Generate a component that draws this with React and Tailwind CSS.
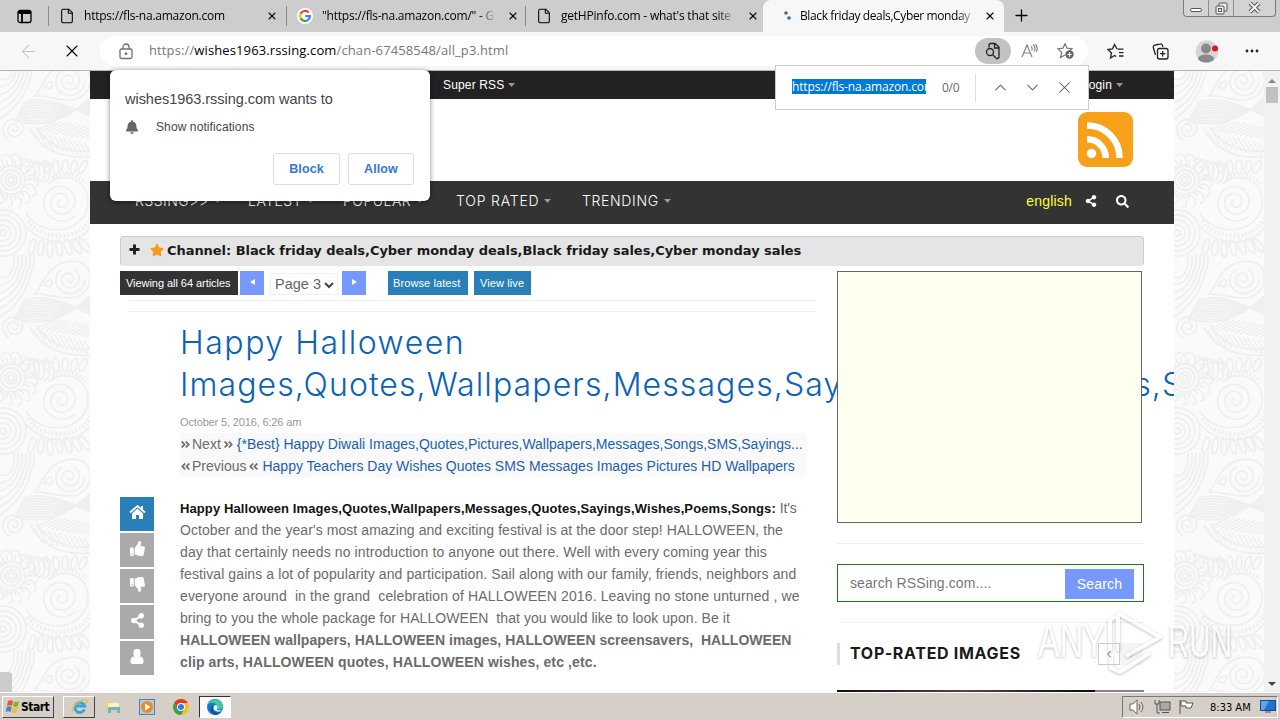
import React from 'react';
import { FaShareAlt, FaSearch, FaThumbsUp, FaThumbsDown, FaStar, FaBell, FaAngleDoubleRight, FaAngleDoubleLeft } from 'react-icons/fa';
import { ArrowLeft, X, Plus, File, ChevronUp, ChevronDown, ChevronLeft, ChevronRight } from 'lucide-react';

const spiral = (cx, cy, r, turns, start = 0) => {
  const steps = turns * 24;
  const points = [];
  for (let i = 0; i <= steps; i += 1) {
    const a = start + (i / 24) * Math.PI * 2;
    const d = r * (1 - i / (steps + 6));
    points.push(`${(cx + Math.cos(a) * d).toFixed(1)},${(cy + Math.sin(a) * d).toFixed(1)}`);
  }
  return points.join(' ');
};

const range = (n) => Array.from({ length: n }, (_, i) => i);

const Paisley = ({ id }) => (
  <svg width="90" height="621" className="block shrink-0 bg-[#fafafa]">
    <defs>
      <pattern id={id} width="90" height="198" patternUnits="userSpaceOnUse">
        <g fill="none" stroke="#efefef" strokeWidth="1.8">
          <polyline points={spiral(69, 10, 16, 2.5)} />
          <path d="M35 25 C44 15 46 -6 72 -8 C96 -8 96 22 76 28 C62 32 48 24 35 25Z M44 16 C50 6 56 12 50 18Z" />
          <path d="M35 223 C44 213 46 192 72 190 C84 190 90 197 90 204" />
          {range(10).map((i) => (
            <path key={i} d={`M${14 + i} ${50 - i * 2} C40 ${56 - i * 3.5} 62 ${54 - i * 2.5} 90 ${27 + i * 2}`} />
          ))}
          {range(6).map((i) => (
            <path key={i} d={`M0 ${48 - i * 8} C${22 - i * 3} ${34 - i * 5} ${32 - i * 4} 12 ${34 - i * 4} -14`} />
          ))}
          {range(6).map((i) => (
            <path key={i} d={`M${34 - i * 4} 184 Q${34 - i * 4} 192 ${33 - i * 4} 200`} />
          ))}
          <polyline points={spiral(14, 58, 12, 2.2, 2)} />
          <path d="M30 58 C42 80 62 88 90 86 M36 56 C46 74 68 82 90 80" />
          {range(11).map((i) => (
            <path key={i} d={`M${34 + i * 5} ${61 + i} l9 15 M${36 + i * 5} ${60 + i * 0.8} l20 -10`} strokeWidth="1.4" />
          ))}
          {[3, 6, 10, 14].map((r) => <circle key={r} cx="11" cy="109" r={r} />)}
          {range(14).map((i) => {
            const a = (i * Math.PI) / 7;
            const x = 11 + Math.cos(a) * 21;
            const y = 109 + Math.sin(a) * 21;
            return <path key={i} d={`M${11 + Math.cos(a) * 14} ${109 + Math.sin(a) * 14} L${x} ${y} m-5 -3 q6 -5 10 2 q3 7 -3 8`} />;
          })}
          {range(5).map((i) => <path key={i} d={`M${24 + i * 5} ${92 + i} q8 -8 10 4 t-6 12`} />)}
          <polyline points={spiral(61, 131, 20, 2.6, 0.8)} />
          <path d="M26 142 C38 165 82 166 88 134 C90 108 64 100 50 112" />
          <path d="M28 150 C44 172 86 170 92 142 M52 107 Q72 98 86 112" strokeWidth="4" strokeDasharray="2 2" />
          <path d="M26 155 C44 178 86 176 94 148" />
          {range(7).map((i) => (
            <ellipse key={i} cx={32 + i * 9} cy={178 - Math.abs(i - 2)} rx="3" ry="8" transform={`rotate(${16 - i * 9} ${32 + i * 9} 176)`} />
          ))}
          {range(5).map((i) => (
            <ellipse key={i} cx={47 + i * 9} cy={96} rx="3" ry="7" transform={`rotate(${i * 12 - 20} ${47 + i * 9} 96)`} />
          ))}
          {[3, 8, 13, 18, 23].map((r) => <circle key={r} cx="3" cy="162" r={r} />)}
        </g>
      </pattern>
    </defs>
    <rect width="90" height="621" fill={`url(#${id})`} />
  </svg>
);

const TabTitle = ({ children, className }) => (
  <span className={`overflow-hidden whitespace-nowrap text-xs tracking-[-.23px] text-black [mask-image:linear-gradient(to_right,black_90%,transparent)] ${className}`}>{children}</span>
);

const GoogleIcon = () => (
  <svg width="16" height="16" viewBox="0 0 16 16" fill="none" strokeWidth="2.2" className="shrink-0">
    <circle cx="8" cy="8" r="8" fill="white" />
    <path d="M11.8 4.6A5 5 0 0 0 3.6 5.8" stroke="#ea4335" />
    <path d="M3.6 5.8A5 5 0 0 0 3.7 10.4" stroke="#fbbc05" />
    <path d="M3.7 10.4A5 5 0 0 0 11.2 11.8" stroke="#34a853" />
    <path d="M11.2 11.8A5 5 0 0 0 13 8.2H8.2" stroke="#4285f4" />
  </svg>
);

const TabBar = () => (
  <div className="flex h-8 shrink-0 bg-[#cdcdcd] font-['Open_Sans',sans-serif]">
    <div className="flex w-12 items-center justify-center">
      <svg width="15" height="15" viewBox="0 0 15 15" fill="none" stroke="black" strokeWidth="1.3">
        <rect x="1" y="1.5" width="13" height="12" rx="2" />
        <path d="M1 3h13M1.5 4h12M5 4v9" strokeWidth="1.8" />
      </svg>
    </div>
    <div className="mt-1.5 h-5 w-px bg-[#8a8a8a]" />
    <div className="flex w-[237px] items-center pl-2.5">
      <File size={16} strokeWidth={1.6} className="shrink-0" />
      <TabTitle className="ml-[9px] mr-1 w-[178px]">https://fls-na.amazon.com</TabTitle>
      <X size={12} strokeWidth={2.2} className="shrink-0" />
    </div>
    <div className="mt-1.5 h-5 w-px bg-[#8a8a8a]" />
    <div className="flex w-[238px] items-center pl-2.5">
      <GoogleIcon />
      <TabTitle className="ml-[9px] mr-[11px] w-[174px]">"https://fls-na.amazon.com/" - G</TabTitle>
      <X size={12} strokeWidth={2.2} className="shrink-0" />
    </div>
    <div className="mt-1.5 h-5 w-px bg-[#8a8a8a]" />
    <div className="flex w-[237px] items-center pl-2.5">
      <File size={16} strokeWidth={1.6} className="shrink-0" />
      <TabTitle className="ml-[9px] mr-3 w-[174px] tracking-[-.3px]">getHPinfo.com - what's that site</TabTitle>
      <X size={12} strokeWidth={2.2} className="shrink-0" />
    </div>
    <div className="flex w-[241px] items-center rounded-t-lg bg-[#f7f7f7] pl-5">
      <svg width="10" height="12" viewBox="0 0 10 12" className="shrink-0">
        <circle cx="3" cy="3" r="1.8" fill="#4a6785" />
        <circle cx="6" cy="8" r="1.8" fill="#2b6ea8" />
      </svg>
      <TabTitle className="ml-[7px] mr-2 w-[176px] tracking-[-.38px]">Black friday deals,Cyber monday</TabTitle>
      <X size={12} strokeWidth={2.2} className="shrink-0" />
    </div>
    <Plus size={19} strokeWidth={1.6} className="ml-2 mt-1.5" />
    <div className="ml-auto mr-1 flex h-[17px] w-[93px] overflow-hidden rounded-b border border-t-0 border-[#7b7b7b] bg-[#d3d3d3]">
      <div className="flex w-[25px] items-center justify-center border-r border-[#8d8d8d] pt-1">
        <div className="h-1 w-3 rounded-sm border border-[#555] bg-white" />
      </div>
      <div className="flex w-[25px] items-center justify-center border-r border-[#8d8d8d]">
        <svg width="13" height="13" viewBox="0 0 13 13" fill="#eee" stroke="#555">
          <rect x="4" y="1" width="8" height="8" rx="1" />
          <rect x="1" y="4" width="8" height="8" rx="1" />
          <rect x="3.5" y="6.5" width="3" height="3" />
        </svg>
      </div>
      <div className="flex flex-1 items-center justify-center">
        <svg width="13" height="12" viewBox="0 0 13 12" fill="none">
          <path d="M2 1l9 9M11 1l-9 9" stroke="#555" strokeWidth="4" />
          <path d="M2 1l9 9M11 1l-9 9" stroke="#f4f4f4" strokeWidth="2" />
        </svg>
      </div>
    </div>
  </div>
);

const Toolbar = () => (
  <div className="flex h-[39px] shrink-0 items-center border-b border-[#b5b5b5] bg-[#f7f7f7]">
    <ArrowLeft size={21} strokeWidth={1.2} className="ml-[18px] text-[#c4c4c4]" />
    <X size={20} strokeWidth={1.3} className="ml-[23px]" />
    <div className="ml-[18px] flex h-[30px] w-[988px] items-center rounded-full bg-white">
      <svg width="14" height="17" viewBox="0 0 14 17" fill="none" stroke="#707070" strokeWidth="1.3" className="ml-[19px]">
        <rect x="1" y="6" width="12" height="9.5" rx="1.5" />
        <path d="M4 6V4a3 3 0 0 1 6 0v2" />
        <circle cx="7" cy="10.7" r=".7" fill="#555" />
      </svg>
      <div className="ml-[16px] w-[826px] whitespace-nowrap font-['Open_Sans',sans-serif] text-[13px] tracking-[.12px] text-[#777]">
        https://<span className="text-black">wishes1963.rssing.com</span>/chan-67458548/all_p3.html
      </div>
      <div className="flex h-[26px] w-9 items-center justify-center rounded-full bg-[#c2c2c2]">
        <svg width="16" height="18" viewBox="0 0 16 18" fill="none" stroke="#222" strokeWidth="1.3">
          <path d="M4 5.500V3a1.500 1.500 0 0 1 1.500-1.500H10L14 5v10a1.500 1.500 0 0 1-1.500 1.500H11M9.500 2v4H14" />
          <circle cx="5" cy="10" r="3.500" />
          <path d="M7.700 12.700L11 16" />
        </svg>
      </div>
      <svg width="17" height="16" viewBox="0 0 17 16" fill="none" stroke="#808080" strokeWidth="1.2" className="ml-2.5">
        <path d="M1 14L6 2l5 12M3 10h6M10 3.5c1.2 1 1.2 3 .6 4M12 1.5c2.3 2 2.3 5 1 7M14.5 1c2 2.5 2 5.500 1 8" />
      </svg>
      <svg width="18" height="18" viewBox="0 0 18 18" fill="none" stroke="#777" strokeWidth="1.2" className="ml-[19px]">
        <path d="M8 1.500l2 4.700 5 .5-3 3M8 13l-4.500 2.500L4.700 10.500 1 6.700l5-.5L8 1.500" />
        <circle cx="12.500" cy="12.500" r="4.200" fill="#666" stroke="none" />
        <path d="M12.500 10.300v4.400M10.300 12.500h4.400" stroke="white" />
      </svg>
    </div>
    <svg width="18" height="17" viewBox="0 0 18 17" fill="none" stroke="#222" strokeWidth="1.3" className="ml-[19px]">
      <path d="M10.500 6.200h6M12 9.700h4.500M12 13h4.500M10 6L7.500 1.500 5.500 6 1 6.500l3.500 3.500-1 5 4-2.500 1.800 1" />
    </svg>
    <svg width="17" height="17" viewBox="0 0 17 17" fill="none" stroke="#222" strokeWidth="1.3" className="ml-[27px]">
      <rect x="5.500" y="5.500" width="10.500" height="10.500" rx="2" />
      <path d="M10.700 8v5.500M8 10.700h5.500M3.500 12L1.300 4.500a2 2 0 0 1 1.400-2.300L8 1a2 2 0 0 1 2.500 1.500L11 4" />
    </svg>
    <svg width="24" height="23" viewBox="0 0 24 23" className="ml-[26px]">
      <circle cx="12" cy="11.500" r="11.300" fill="#d6d6d6" />
      <circle cx="11" cy="8.500" r="5" fill="#8a8a8a" />
      <ellipse cx="11" cy="18.500" rx="8" ry="4" fill="#8a8a8a" />
      <circle cx="20" cy="8.500" r="3" fill="#e3131f" />
    </svg>
    <svg width="14" height="4" viewBox="0 0 14 4" className="ml-[26px]">
      <path d="M2 2h.01M7 2h.01M12 2h.01" stroke="#222" strokeWidth="2.800" strokeLinecap="round" />
    </svg>
  </div>
);

const Caret = ({ className = '' }) => (
  <svg width="7" height="4" viewBox="0 0 7 4" className={`inline-block shrink-0 ${className}`}>
    <path d="M0 0h7L3.500 4z" fill="#999" />
  </svg>
);

const NavItem = ({ children, className }) => (
  <div className={`flex shrink-0 items-center whitespace-nowrap ${className}`}>
    {children}
    <Caret className="ml-[5px]" />
  </div>
);

const SiteHeader = () => (
  <header className="shrink-0">
    <div className="flex h-7 items-center bg-[#222] pl-[353px] text-xs tracking-[.15px] text-white">
      Super RSS <Caret className="ml-1" />
      <span className="ml-auto">Login</span>
      <Caret className="ml-1 mr-[51px]" />
    </div>
    <div className="flex h-[82px] justify-end bg-white pr-[41px] pt-[13px]">
      <svg width="55" height="55" viewBox="0 0 55 55">
        <rect width="55" height="55" rx="9" fill="#f7a11b" />
        <circle cx="13.500" cy="41.500" r="4.700" fill="white" />
        <path d="M9 27.300A18.500 18.500 0 0 1 27.700 46M9 13.500A32 32 0 0 1 41.500 46" fill="none" stroke="white" strokeWidth="6.500" />
      </svg>
    </div>
    <nav className="flex h-[43px] items-center bg-[#333] pb-[3px] pl-[45px] font-['Inter',sans-serif] text-sm font-light tracking-[.5px] text-white">
      <NavItem className="w-[113px]">RSSING&gt;&gt;</NavItem>
      <NavItem className="w-[95px]">LATEST</NavItem>
      <NavItem className="w-[113px]">POPULAR</NavItem>
      <NavItem className="w-[126px] tracking-[.8px]">TOP RATED</NavItem>
      <NavItem className="tracking-[.65px]">TRENDING</NavItem>
      <span className="ml-auto font-['Liberation_Sans',sans-serif] text-[14px] tracking-[.2px] text-[#ffff33]">english</span>
      <FaShareAlt size={12} className="ml-[13px]" />
      <FaSearch size={13} className="ml-[19px] mr-[45px]" />
    </nav>
  </header>
);

const PageControls = () => (
  <div className="flex h-6 whitespace-nowrap text-[11px] text-white">
    <div className="flex w-[118px] items-center bg-[#333] pl-1.5 tracking-[-.05px]">Viewing all 64 articles</div>
    <div className="ml-0.5 flex w-6 items-center justify-center bg-[#7799ff]">
      <svg width="5" height="6" viewBox="0 0 5 6" className="mb-0.5"><path d="M5 0v6L0 3z" fill="white" /></svg>
    </div>
    <div className="ml-1.5 mt-0.5 flex h-[22px] w-[68px] items-center justify-between border border-[#f0f0f0] bg-white pl-1 pr-[3px] pt-0.5 text-[14.500px] text-[#666]">
      Page 3
      <svg width="10" height="7" viewBox="0 0 10 7"><path d="M1 1l4 4 4-4" fill="none" stroke="#444" strokeWidth="2" /></svg>
    </div>
    <div className="ml-1 flex w-6 items-center justify-center bg-[#7799ff]">
      <svg width="5" height="6" viewBox="0 0 5 6" className="mb-0.5"><path d="M0 0v6l5-3z" fill="white" /></svg>
    </div>
    <div className="ml-[22px] flex w-20 items-center bg-[#2980b9] pl-[5px] tracking-[.1px]">Browse latest</div>
    <div className="ml-1.5 flex w-[57px] items-center bg-[#2980b9] pl-1.5 tracking-[.1px]">View live</div>
  </div>
);

const HomeIcon = () => (
  <svg width="17" height="15" viewBox="0 0 17 15" fill="white">
    <path d="M1 7.500L8.500 1 16 7.500" fill="none" stroke="white" strokeWidth="1.800" />
    <path d="M12 1h2v4l-2-2zM3 8.500l5.500-5 5.500 5V14h-4v-4H7v4H3z" />
  </svg>
);

const PersonIcon = () => (
  <svg width="14" height="16" viewBox="0 0 14 16" fill="white">
    <rect x="3.500" y="0" width="7" height="8" rx="3" />
    <path d="M3 7.500h8q2.500 1 2.500 4V13q0 2-2 2h-9q-2 0-2-2v-1.500q0-3 2.500-4z" />
  </svg>
);

const shareIcons = [
  <HomeIcon />,
  <FaThumbsUp size={15} />,
  <FaThumbsDown size={15} />,
  <FaShareAlt size={15} />,
  <PersonIcon />,
];

const ShareColumn = () => (
  <div className="mt-[185px] flex w-[34px] shrink-0 flex-col gap-0.5 text-white">
    {shareIcons.map((icon, i) => (
      <div key={i} className={`flex h-[34px] items-center justify-center pb-[3px] ${i === 0 ? 'bg-[#2980b9]' : 'bg-[#aaa]'}`}>{icon}</div>
    ))}
  </div>
);

const lines = [
  { text: "October and the year's most amazing and exciting festival is at the door step! HALLOWEEN, the", className: 'tracking-[.07px]' },
  { text: 'day that certainly needs no introduction to anyone out there. Well with every coming year this', className: 'tracking-[.12px]' },
  { text: 'festival gains a lot of popularity and participation. Sail along with our family, friends, neighbors and', className: 'tracking-[.1px]' },
  { text: 'everyone around  in the grand  celebration of HALLOWEEN 2016. Leaving no stone unturned , we', className: 'tracking-[.12px]' },
  { text: 'bring to you the whole package for HALLOWEEN  that you would like to look upon. Be it', className: 'tracking-[.06px]' },
  { text: 'HALLOWEEN wallpapers, HALLOWEEN images, HALLOWEEN screensavers,  HALLOWEEN', className: 'font-bold tracking-[.02px]' },
  { text: 'clip arts, HALLOWEEN quotes, HALLOWEEN wishes, etc ,etc.', className: 'font-bold tracking-[.12px]' },
];

const Article = () => (
  <article className="ml-[26px] w-[627px] shrink-0 pt-2.5 text-sm text-[#6b6b6b]">
    <h1 className="whitespace-nowrap font-['Inter',sans-serif] text-[32px] font-light leading-[42px] text-[#0b63b5]">
      <div className="tracking-[1.55px]">Happy Halloween</div>
      <div className="tracking-[1.1px]">Images,Quotes,Wallpapers,Messages,Sayings,Wishes,Poems,S</div>
    </h1>
    <div className="mt-2 h-[19px] text-[11px] leading-4 tracking-[-.15px] text-[#999]">October 5, 2016, 6:26 am</div>
    <div className="whitespace-nowrap bg-[#f9f9f9] leading-[22px]">
      <div className="flex items-center">
        <FaAngleDoubleRight size={11} className="mr-px shrink-0" />Next
        <FaAngleDoubleRight size={11} className="ml-0.5 mr-[3px] shrink-0" />
        <span className="text-[#1b62a8]">{'{*Best} Happy Diwali Images,Quotes,Pictures,Wallpapers,Messages,Songs,SMS,Sayings...'}</span>
      </div>
      <div className="flex items-center">
        <FaAngleDoubleLeft size={11} className="mr-px shrink-0" />Previous
        <FaAngleDoubleLeft size={11} className="ml-0.5 mr-[3px] shrink-0" />
        <span className="text-[#1b62a8]">Happy Teachers Day Wishes Quotes SMS Messages Images Pictures HD Wallpapers</span>
      </div>
    </div>
    <div className="mt-5 whitespace-pre leading-[22px]">
      <div className="h-[22px] tracking-[-.1px]"><b className="text-[13px] tracking-[.1px] text-[#111]">Happy Halloween Images,Quotes,Wallpapers,Messages,Quotes,Sayings,Wishes,Poems,Songs:</b> It's</div>
      {lines.map(({ text, className }) => <div key={text} className={className}>{text}</div>)}
    </div>
  </article>
);

const Sidebar = () => (
  <aside className="relative ml-[21px] w-[307px] shrink-0">
    <div className="h-[252px] w-[305px] border border-[#666] bg-[#fffff0]" />
    <div className="mt-5 h-px bg-[#eee]" />
    <div className="mt-5 flex h-[38px] items-center justify-between border border-[#1b7a1b] bg-white pl-3 pr-[9px] text-sm tracking-[.1px] text-[#777]">
      search RSSing.com....
      <div className="mt-0.5 flex h-[30px] w-[69px] items-center justify-center bg-[#7799ff] tracking-[.2px] text-white">Search</div>
    </div>
    <div className="ml-1 mt-5 h-px bg-[#eee]" />
    <div className="mt-5 flex h-[22px] items-center border-l-[3px] border-[#ddd] pl-2.5">
      <h2 className="mb-0.5 whitespace-nowrap font-['Inter',sans-serif] text-base font-bold tracking-[.7px] text-[#1a1a1a]">TOP-RATED IMAGES</h2>
      <div className="relative z-20 ml-auto flex h-[22px] w-[22px] items-center justify-center border border-[#ccc] text-[#666]"><ChevronLeft size={12} /></div>
      <div className="mr-px flex h-[22px] w-[23px] items-center justify-center bg-[#f5f5f5] text-[#ccc]"><ChevronRight size={11} /></div>
    </div>
    <div className="mt-[25px] flex h-1">
      <div className="flex-1 bg-linear-to-r from-[#1c0d10] via-[#5b4540] to-[#120a0c]" />
      <div className="w-[49px] bg-[#8a7f95]" />
    </div>
  </aside>
);

const NotificationPrompt = () => (
  <div className="absolute left-[110px] top-[70px] h-[131px] w-80 rounded-md bg-white px-[15px] pt-5 text-[#444] shadow-[0_1px_5px_rgba(0,0,0,.5)]">
    <div className="text-[14.500px] leading-[18px] tracking-[-.03px]">wishes1963.rssing.com wants to</div>
    <div className="mt-[11px] flex items-center text-xs leading-4 tracking-[.1px]">
      <FaBell size={14} className="mr-[17px] text-[#666]" />Show notifications
    </div>
    <div className="mt-[18px] flex justify-end gap-2 pr-px text-[12.500px] font-bold tracking-[.1px] text-[#3477d6]">
      <div className="flex h-8 w-[67px] items-center justify-center rounded-[3px] border border-[#ddd]">Block</div>
      <div className="flex h-8 w-[66px] items-center justify-center rounded-[3px] border border-[#ddd]">Allow</div>
    </div>
  </div>
);

const FindBar = () => (
  <div className="absolute left-[775px] top-[65px] flex h-[45px] w-[314px] items-center border border-[#ccc] bg-white pl-4 font-['Open_Sans',sans-serif] text-xs">
    <div className="mb-0.5 w-[134px] overflow-hidden whitespace-nowrap bg-[#0078d7] leading-[15px] tracking-[-.15px] text-white">https://fls-na.amazon.com</div>
    <div className="ml-4 w-[18px] tracking-[-.3px] text-[#666]">0/0</div>
    <div className="ml-[15px] h-7 w-px bg-[#ddd]" />
    <ChevronUp size={19} strokeWidth={1.3} className="ml-[15px] text-[#666]" />
    <ChevronDown size={19} strokeWidth={1.3} className="ml-[13px] text-[#666]" />
    <X size={19} strokeWidth={1.3} className="ml-[13px] text-[#555]" />
  </div>
);

const Watermark = () => (
  <svg width="210" height="72" viewBox="0 0 210 72" className="absolute left-[1030px] top-[604px] opacity-70 [filter:drop-shadow(0_1px_1.500px_rgba(0,0,0,.35))]">
    <g fill="white" fontFamily="Liberation Sans Narrow, Liberation Sans, sans-serif" fontSize="47">
      <text x="8" y="53" textLength="67" lengthAdjust="spacingAndGlyphs">ANY</text>
      <text x="138" y="53" textLength="64" lengthAdjust="spacingAndGlyphs">RUN</text>
    </g>
    <g fill="none" stroke="white" strokeWidth="4" strokeLinejoin="round">
      <path d="M88 9v38M88 9l42 24-34 19M80 48V16l6-4" />
      <path d="M81 50v14l9 4 30-19" />
    </g>
  </svg>
);

const Taskbar = () => (
  <div className="flex h-[28px] shrink-0 items-center border-t border-white bg-[#d6cfc7] font-['DejaVu_Sans_Condensed','DejaVu_Sans',sans-serif]">
    <div className="ml-0.5 flex h-[22px] w-[52px] items-center border border-b-[#444] border-l-white border-r-[#444] border-t-white pl-0.5 text-xs font-bold tracking-[-.5px]">
      <svg width="15" height="15" viewBox="0 0 15 15" className="mr-px shrink-0">
        <path d="M3 2q2.500-1.500 5 0L7 7Q4.500 5.500 2 7z" fill="#e8562a" />
        <path d="M9 2.500q2.500 1 5-.5l-1 5q-2.500 1.500-5 .5z" fill="#7cb62d" />
        <path d="M1.700 8q2.500-1.500 5 0l-1 5q-2.500-1.500-5 0z" fill="#3a89d6" />
        <path d="M7.700 8.500q2.500 1 5-.5l-1 5q-2.500 1.500-5 .5z" fill="#f5bd26" />
      </svg>
      Start
    </div>
    <div className="ml-[9px] flex h-[22px] w-8 items-center justify-center border border-b-[#444] border-l-white border-r-[#444] border-t-white">
      <svg width="17" height="17" viewBox="0 0 17 17" fill="none">
        <path d="M13.500 11.500A5 5 0 1 1 13.700 8H5" stroke="#36a4df" strokeWidth="2.800" />
        <path d="M1.500 14C-1 10 12-1 16 2q.5 2-2 4" stroke="#e9bd35" strokeWidth="1.300" />
      </svg>
    </div>
    <svg width="17" height="17" viewBox="0 0 17 17" className="ml-[10px]">
      <path d="M1 3h5l2 2h7v9H1z" fill="#ecd06e" />
      <path d="M3 5h11v4H3z" fill="#fff3b8" />
      <path d="M3 15V9h12v6h-3v-3H6v3z" fill="#6bb3d9" />
    </svg>
    <svg width="16" height="16" viewBox="0 0 16 16" className="ml-[17px]">
      <rect x=".5" y=".5" width="15" height="15" fill="#a9cdeb" stroke="#4c82b5" />
      <circle cx="8" cy="8" r="6" fill="#f08a1c" />
      <path d="M6 4.500v7L11.500 8z" fill="white" />
    </svg>
    <svg width="16" height="16" viewBox="0 0 16 16" className="ml-[18px]">
      <circle cx="8" cy="8" r="8" fill="#fbc116" />
      <path d="M1.100 4A8 8 0 0 1 14.900 4H8A4 4 0 0 0 4.500 10z" fill="#e23b2e" />
      <path d="M1.100 4A8 8 0 0 0 8 16l3.500-6h-7z" fill="#2da44e" />
      <circle cx="8" cy="8" r="4" fill="white" />
      <circle cx="8" cy="8" r="3" fill="#3b78e7" />
    </svg>
    <div className="ml-[10px] flex h-[22px] w-8 items-center justify-center border border-b-white border-l-[#333] border-r-white border-t-[#333] bg-[#fbfaf8]">
      <svg width="16" height="16" viewBox="0 0 16 16">
        <circle cx="8" cy="8" r="8" fill="#1479c9" />
        <path d="M.5 6C3-1 14-2 16 7c0 4-5 4-6.500 3C12 5 5 1 .5 6" fill="#3fc8a1" />
        <path d="M6 7c-2 5 3 8 8 6-1.500 2-4 3-6 3-5-2-6-8-2-9" fill="#0e4f9f" />
        <path d="M8 6c3 0 3 3 1.500 4 1 2 4 1.500 5 1-2 3-8 1-8-2q0-2 1.500-3" fill="white" />
      </svg>
    </div>
    <div className="ml-auto mr-0.5 flex h-[22px] w-[156px] items-center border border-b-white border-l-[#777] border-r-white border-t-[#777] pl-1.5 text-[11px]">
      <svg width="17" height="16" viewBox="0 0 17 16" fill="none" stroke="#666">
        <path d="M1 5h3l4-4v14l-4-4H1z" fill="white" />
        <path d="M10 5q2 3 0 6M12 3q4 5 0 10" />
      </svg>
      <svg width="17" height="16" viewBox="0 0 17 16" fill="white" stroke="#555" className="ml-2">
        <rect x="6" y="3" width="10" height="8" fill="#aaa" />
        <path d="M1 1v4h4V1M3 5v9h3M8 13.500h7" fill="none" />
      </svg>
      <svg width="16" height="16" viewBox="0 0 16 16" fill="white" stroke="#555" className="ml-[7px]">
        <path d="M2 15V1M3 2h5v2h7l-2 5H8V7H3z" />
      </svg>
      <span className="ml-4 mt-[3px] whitespace-nowrap">8:33 AM</span>
      <svg width="16" height="13" viewBox="0 0 16 13" className="ml-auto mr-px">
        <rect x=".5" y=".5" width="15" height="10" fill="#2272cf" stroke="#174a91" />
        <path d="M1 1h8L4 10H1z" fill="#5fa5ea" />
        <path d="M5 12h6" stroke="#555" />
      </svg>
    </div>
  </div>
);

const App = () => (
  <div className="relative flex h-[720px] w-[1280px] flex-col overflow-hidden bg-white font-['Liberation_Sans',Arial,sans-serif]">
    <TabBar />
    <Toolbar />
    <div className="relative flex h-[621px] shrink-0">
      <Paisley id="paisley-left" />
      <main className="h-full w-[1084px] shrink-0 overflow-hidden bg-white">
        <SiteHeader />
        <div className="mx-[30px] mt-3 flex h-[30px] items-center rounded border border-[#ccc] border-b-[#e5e5e5] bg-[#e5e5e5] pl-2 font-['DejaVu_Sans',sans-serif] text-[13px] font-bold text-[#1a1a1a]">
          <svg width="11" height="11" viewBox="0 0 11 11" className="mb-[3px]"><path d="M4 .5h3V4h3.500v3H7v3.500H4V7H.5V4H4z" fill="#222" /></svg>
          <FaStar size={14} className="mb-[3px] ml-2.5 mr-[3px] text-[#f79a1c]" />
          <span className="tracking-[-.05px]">Channel: Black friday deals,Cyber monday deals,Black friday sales,Cyber monday sales</span>
        </div>
        <div className="mt-[5px] flex pl-[30px]">
          <div className="w-[696px] shrink-0">
            <PageControls />
            <div className="ml-[9px] mt-[5px] h-3 border-y border-[#eee]" />
            <div className="flex">
              <ShareColumn />
              <Article />
            </div>
          </div>
          <Sidebar />
        </div>
      </main>
      <Paisley id="paisley-right" />
      <div className="flex w-4 flex-col items-center bg-[#f1f1f1] pb-1.5 pt-2">
        <svg width="8" height="4" viewBox="0 0 8 4"><path d="M0 4h8L4 0z" fill="#888" /></svg>
        <div className="mt-1 h-4 w-3 bg-[#c1c1c1]" />
        <svg width="8" height="4" viewBox="0 0 8 4" className="mt-auto"><path d="M0 0h8L4 4z" fill="#444" /></svg>
      </div>
      <div className="absolute bottom-0 left-0 h-5 w-3 rounded-tr bg-[#ccc]" />
    </div>
    <Taskbar />
    <NotificationPrompt />
    <FindBar />
    <Watermark />
  </div>
);

export default App;
